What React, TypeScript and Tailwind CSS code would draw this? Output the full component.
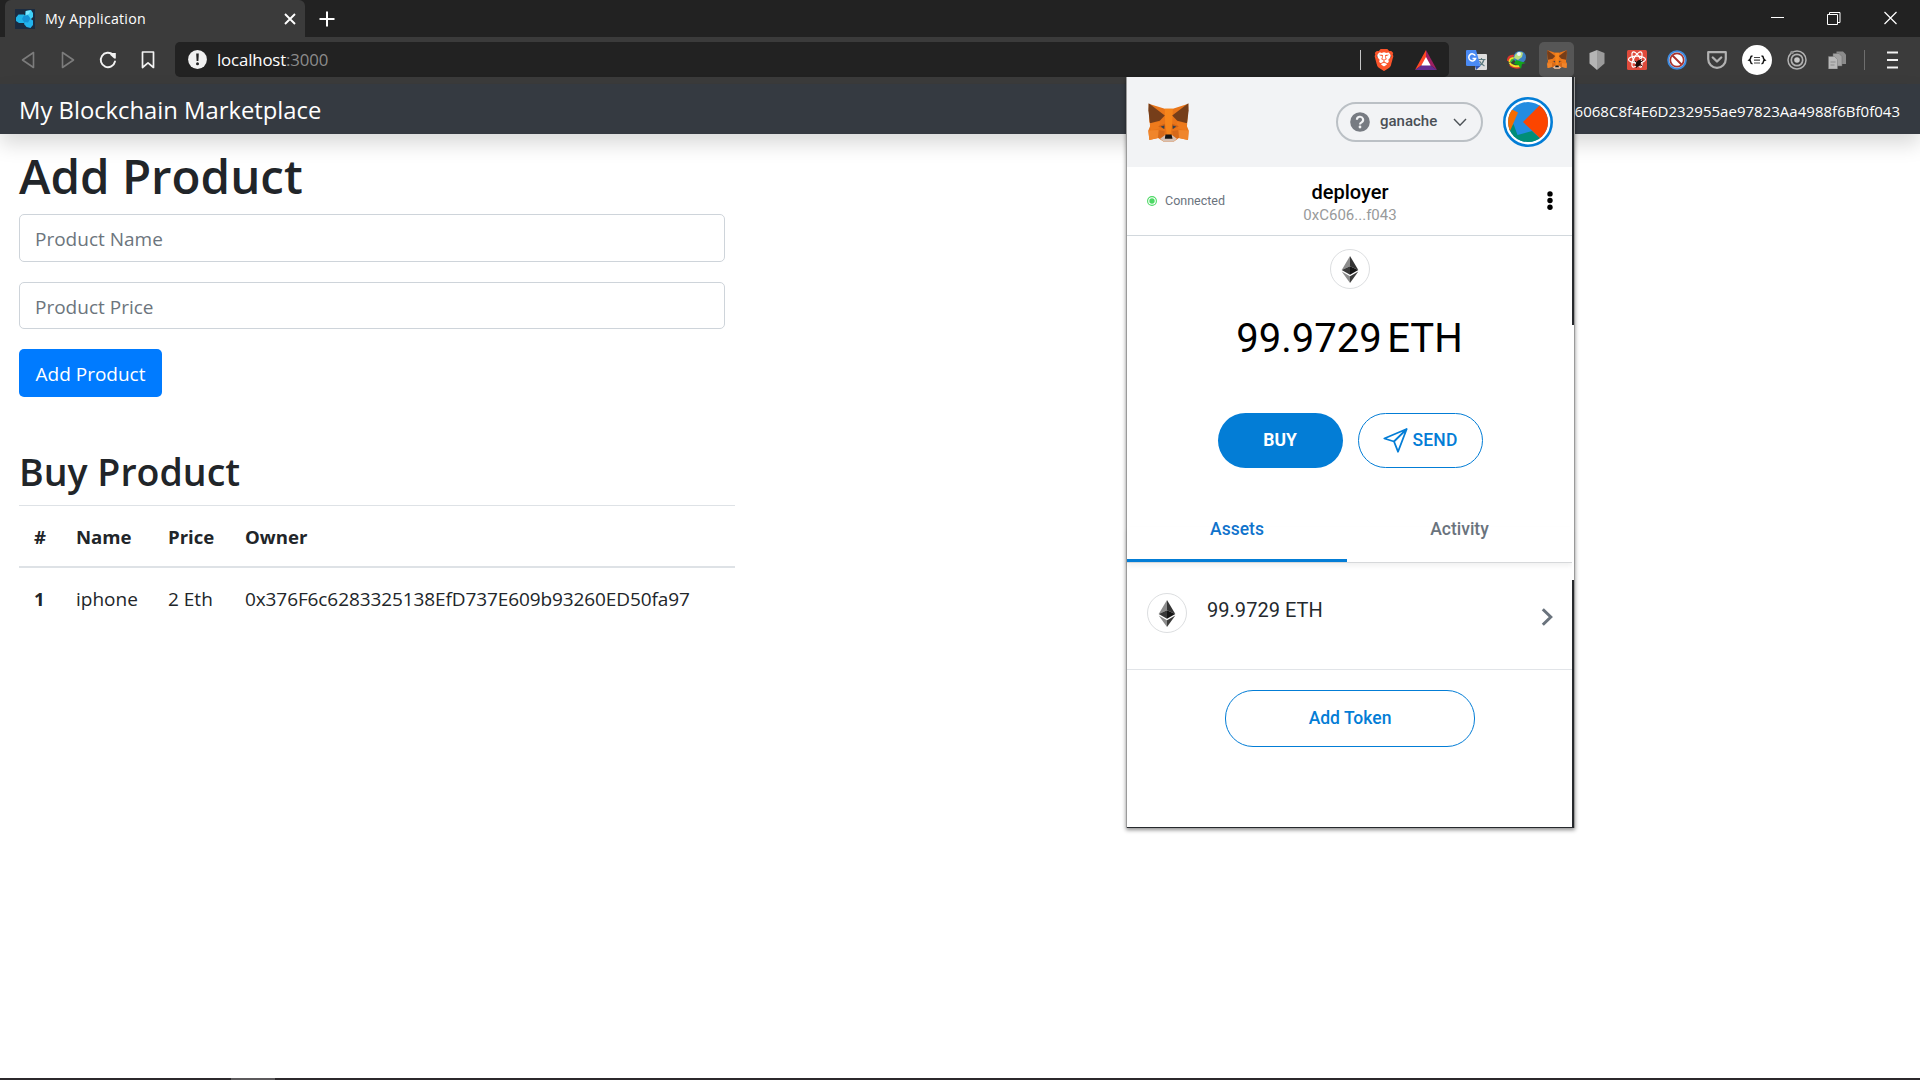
import React from 'react';
import { SiBrave } from 'react-icons/si';

function Fox({ className }: { className: string }) {
  return (
    <svg className={className} viewBox="0 0 122 116">
      <polygon points="2,2 50,17 74,17 120,2 117,58 113,62 121,82 119,110 92,104 76,115 47,115 30,104 4,110 1,82 9,62 4,58" fill="#e8751a" />
      <polygon points="50,17 74,17 72,62 67,94 56,94 51,62" fill="#f6851b" />
      <polygon points="5,60 37,56 32,76 8,82" fill="#ee7a1c" />
      <polygon points="117,60 85,56 90,76 114,82" fill="#ee7a1c" />
      <polygon points="1,82 32,80 30,104 4,110" fill="#f0852b" />
      <polygon points="121,82 90,80 92,104 119,110" fill="#f0852b" />
      <polygon points="32,80 50,84 46,103 30,104" fill="#d5691a" />
      <polygon points="90,80 72,84 76,103 92,104" fill="#d5691a" />
      <polygon points="2,1 50,37 35,53 6,60 1,22" fill="#763e1a" />
      <polygon points="120,1 72,37 87,53 116,60 121,22" fill="#763e1a" />
      <polygon points="30,69 50,62 50,78" fill="#cd6116" />
      <polygon points="92,69 72,62 72,78" fill="#cd6116" />
      <polygon points="38,70 49,67 48,77" fill="#33414d" />
      <polygon points="84,70 73,67 74,77" fill="#33414d" />
      <polygon points="36,106 50,96 72,96 86,106 76,115 47,115" fill="#d7c1b3" />
      <polygon points="52,94 70,94 73,106 50,106" fill="#161616" />
    </svg>
  );
}

function Eth() {
  return (
    <div className="flex h-10 w-10 shrink-0 items-center justify-center rounded-full border border-[#dcdee0] bg-white">
      <svg className="h-[27px] w-[18px]" viewBox="0 0 18 28">
        <polygon points="9,0 9,10.5 0.4,14.5" fill="#8c8c8c" />
        <polygon points="9,0 17.6,14.5 9,10.5" fill="#343434" />
        <polygon points="0.4,14.5 9,10.5 9,19.4" fill="#393939" />
        <polygon points="17.6,14.5 9,10.5 9,19.4" fill="#141414" />
        <polygon points="0.4,16.2 9,21 9,28" fill="#8c8c8c" />
        <polygon points="17.6,16.2 9,21 9,28" fill="#3c3c3b" />
      </svg>
    </div>
  );
}

function Cell({ children }: { children: React.ReactNode }) {
  return <div className="flex h-[35px] w-10 shrink-0 items-center justify-center">{children}</div>;
}

function TabStrip() {
  return (
    <div className="flex h-[37px] bg-[#222222] pl-[5px]">
      <div className="flex h-[37px] w-[300px] items-center rounded-t-md bg-[#3b3b3b] pl-[10px] pr-[9px]">
        <svg className="h-5 w-5" viewBox="0 0 20 20">
          <rect width="20" height="20" fill="#1b2b40" />
          <path d="M1 8.500 3.500 5.500H9l3 3.500-2.500 5H4L1 12z" fill="#20b4e8" />
          <path d="m10.500 2 5.500-1 2 3v4l-3 3-5-3z" fill="#3fd0f7" />
          <path d="m10 12 5-2.500 3 2V16l-2.500 3-4-1-2.500-3z" fill="#22b4ee" />
          <path d="M8.500 7 13 6l2.500 3.500-2.500 4-4-.5-2-3z" fill="#1593d6" />
          <path d="m11 2 4.500-.5L14 5l-3 1z" fill="#7be6ff" />
        </svg>
        <span className="ml-[10px] mt-px flex-1 text-[14.200px] tracking-[0.230px] text-white">My Application</span>
        <svg className="h-3 w-3" viewBox="0 0 12 12" stroke="#fff" strokeWidth="1.900" fill="none"><path d="m1 1 10 10M11 1 1 11" /></svg>
      </div>
      <div className="flex flex-1 items-center pl-[14px]">
        <svg className="h-4 w-4" viewBox="0 0 16 16" stroke="#fff" strokeWidth="2" fill="none"><path d="M8 .5v15M.5 8h15" /></svg>
      </div>
      <div className="flex items-center pb-px pr-[22px]">
        <svg className="h-[14px] w-[14px]" viewBox="0 0 14 14" stroke="#fff" fill="none"><path d="M0 6.500h13" /></svg>
        <svg className="ml-[42px] h-[14px] w-[14px]" viewBox="0 0 14 14" stroke="#fff" fill="none"><path d="M.5 3.500h10v10H.5zM2.500 3.500V1.500h10.500v10h-2.500" /></svg>
        <svg className="ml-[43px] h-[14px] w-[14px]" viewBox="0 0 14 14" stroke="#fff" strokeWidth="1.200" fill="none"><path d="m.5 1 12 12M12.500 1l-12 12" /></svg>
      </div>
    </div>
  );
}

function Toolbar() {
  return (
    <div className="flex h-[47px] items-start bg-[#3b3b3b] pt-[5px]">
      <div className="flex h-[35px] w-[175px] items-center">
        <svg className="ml-[21px] h-[18px] w-[14px]" viewBox="0 0 14 18" fill="none" stroke="#7c7c7c" strokeWidth="1.600" strokeLinejoin="round"><path d="M12.500 1.500v15L1.500 9z" /></svg>
        <svg className="ml-[26px] h-[18px] w-[14px]" viewBox="0 0 14 18" fill="none" stroke="#7c7c7c" strokeWidth="1.600" strokeLinejoin="round"><path d="M1.500 1.500v15l11-7.500z" /></svg>
        <svg className="ml-[24px] h-[18px] w-[18px]" viewBox="0 0 18 18" fill="none" stroke="#f2f2f2" strokeWidth="1.900"><path d="M16 10.500A7.200 7.200 0 1 1 14 3.800" strokeLinecap="round" /><path d="M11.300 2h5.500v5.500h-1.600L11.300 4z" fill="#f2f2f2" stroke="none" /></svg>
        <svg className="ml-[24px] h-[18px] w-[14px]" viewBox="0 0 14 18" fill="none" stroke="#f2f2f2" strokeWidth="1.700" strokeLinejoin="round"><path d="M1.500 1h11v15.500L7 11.800l-5.500 4.700z" /></svg>
      </div>
      <div className="flex h-[35px] w-[1274px] items-center rounded-[5px] bg-[#222222] pl-[13px] pr-[12px]">
        <svg className="h-[19px] w-[19px]" viewBox="0 0 19 19"><circle cx="9.500" cy="9.500" r="9.400" fill="#f0f0f0" /><path d="M8.200 3.500h2.600l-.4 7.500H8.600z" fill="#222" /><circle cx="9.500" cy="13.800" r="1.500" fill="#222" /></svg>
        <span className="ml-[10px] flex-1 pt-px text-[16.800px] tracking-[-0.140px] text-white">localhost<span className="text-[#8c8c8c]">:3000</span></span>
        <div className="h-5 w-px bg-[#c4c4c4]" />
        <div className="relative ml-[13px] h-[22px] w-5">
          <svg className="absolute inset-0 h-[22px] w-5" viewBox="0 0 20 22"><path d="M6 2h8l3 3-1.500 9.500L10 20l-5.500-5.500L3 5z" fill="#fff" /></svg>
          <SiBrave className="absolute left-[-1px] top-0 h-[22px] w-[22px] text-[#fb542b]" />
        </div>
        <svg className="ml-[21px] h-5 w-[22px]" viewBox="0 0 22 20"><polygon points="11,0 0,20 11,12" fill="#ff4724" /><polygon points="11,0 22,20 11,12" fill="#9e1f63" /><polygon points="0,20 22,20 11,12" fill="#662d91" /><polygon points="11,7 6.300,15.500 15.700,15.500" fill="#fff" /></svg>
      </div>
      <div className="flex pl-[7.500px]">
        <Cell>
          <svg className="h-5 w-[21px]" viewBox="0 0 21 20"><rect x="9" y="4" width="12" height="16" rx="1" fill="#dedede" /><path d="M12 9.500h7.500M15.500 8v1.500M18 9.500c-.8 3-2.500 5-5 6.500M13.500 11c1 2.500 3 4 5 5" stroke="#607c80" strokeWidth="1.200" fill="none" /><path d="M1 0h9l4.500 16H1.200Q0 16 0 15V1q0-1 1-1z" fill="#4a8af4" /><path d="M10 20 9 16h5.500z" fill="#2f57b8" /><path d="M9.300 5.600A3.500 3.500 0 1 0 9.600 8.500H6.500" stroke="#fff" strokeWidth="1.500" fill="none" /></svg>
        </Cell>
        <Cell>
          <svg className="h-5 w-5" viewBox="0 0 20 20"><path d="M1 11c0-6 8-7 11-2M3 15c3 3 8 3 10 2" fill="none" stroke="#df362d" strokeWidth="2.200" /><path d="M2.500 12c0-5 7-5 9-2M2.500 12.500c1 3 6 4.500 10 3.500" fill="none" stroke="#f0df29" strokeWidth="2" /><path d="M4 12c1-4 6-3 7-1" fill="none" stroke="#37b83a" strokeWidth="1.600" /><circle cx="12.800" cy="7.200" r="6.200" fill="#3c7fc2" /><path d="M8 5c2-3 6-4 8-2l-1 4-4 3-4-2z" fill="#b7dd7e" /><circle cx="12" cy="4" r="2" fill="#e6f4ff" /><path d="m9 10 10 3-4 1-1 5-2.500-4L7 14z" fill="#12a51e" /></svg>
        </Cell>
        <Cell>
          <div className="flex h-[35px] w-[35px] shrink-0 items-center justify-center rounded-[5px] bg-[#565656]"><Fox className="h-[19px] w-5" /></div>
        </Cell>
        <Cell>
          <svg className="h-5 w-4" viewBox="0 0 16 20"><path d="M8 0 .5 3v10.500L8 20z" fill="#b5b5b5" /><path d="m8 0 7.500 3v10.500L8 20z" fill="#9b9b9b" /></svg>
        </Cell>
        <Cell>
          <svg className="h-5 w-5" viewBox="0 0 20 20"><rect width="20" height="20" rx="1.500" fill="#e04a3b" /><g fill="none" stroke="#fff" strokeWidth="1.200"><ellipse cx="10" cy="9.500" rx="8.500" ry="3.300" /><ellipse cx="10" cy="9.500" rx="8.500" ry="3.300" transform="rotate(60 10 9.500)" /><ellipse cx="10" cy="9.500" rx="8.500" ry="3.300" transform="rotate(120 10 9.500)" /></g><ellipse cx="11.500" cy="13.400" rx="2.300" ry="3.600" fill="#1d0d0b" transform="rotate(25 11.500 13)" /><path d="m7.500 11 8 5M8 15.500l8-5M9 18l5-9" stroke="#1d0d0b" strokeWidth="1" /></svg>
        </Cell>
        <Cell>
          <svg className="h-5 w-5" viewBox="0 0 20 20"><circle cx="10" cy="10" r="8.800" fill="#fff" stroke="#3d8be0" strokeWidth="2" /><circle cx="10" cy="10" r="6.700" fill="#fff" stroke="#a8322c" strokeWidth="1.700" /><path d="m5.500 5.500 9 9" stroke="#a8322c" strokeWidth="2" /></svg>
        </Cell>
        <Cell>
          <svg className="h-[18px] w-5" viewBox="0 0 20 18"><path d="M1.200 1.200h17.600V8a8.800 8.800 0 0 1-17.600 0z" fill="none" stroke="#b1b1b1" strokeWidth="2.200" strokeLinejoin="round" /><path d="m5.800 6.500 4.200 4 4.200-4" fill="none" stroke="#b1b1b1" strokeWidth="2.400" strokeLinecap="round" strokeLinejoin="round" /></svg>
        </Cell>
        <Cell>
          <svg className="h-[30px] w-[30px] shrink-0" viewBox="0 0 30 30"><circle cx="15" cy="15" r="15" fill="#fff" /><path d="M10.500 11q-1.800 0-1.800 1.500t-1.500 2.700q1.500.3 1.500 1.800t1.800 1.700M19.500 11q1.800 0 1.800 1.500t1.500 2.700q-1.500.3-1.500 1.800t-1.800 1.700" fill="none" stroke="#111" strokeWidth="1.500" /><path d="M12 12.500h6M12 15.200h6M12 18h6" stroke="#444" strokeWidth="1.200" /></svg>
        </Cell>
        <Cell>
          <svg className="h-5 w-5" viewBox="0 0 20 20" fill="none" stroke="#b1b1b1"><circle cx="10" cy="10" r="9" strokeWidth="1.500" /><circle cx="10" cy="10" r="5.700" strokeWidth="1.700" /><circle cx="10" cy="10" r="2.800" fill="#c8c8c8" stroke="none" /><circle cx="5" cy="2.500" r="1.800" fill="#8a8a8a" stroke="none" /></svg>
        </Cell>
        <Cell>
          <svg className="h-[18px] w-[18px]" viewBox="0 0 18 18"><path d="M8.500.500h6.500l3 3V13H8.500z" fill="#8b8b8b" /><path d="M5 2.500h6l3 3V15H5z" fill="#a3a3a3" stroke="#6a6a6a" strokeWidth=".5" /><path d="M.5 5.500h6l3 3V18h-9z" fill="#b9b9b9" stroke="#777" strokeWidth=".5" /><path d="M2.500 11h5M2.500 14h4" stroke="#8b8b8b" /></svg>
        </Cell>
      </div>
      <div className="flex h-[35px] items-center pl-[7.500px]">
        <div className="h-5 w-px bg-[#6e6e6e]" />
        <svg className="ml-[22px] h-[18px] w-[11px]" viewBox="0 0 11 18" stroke="#f2f2f2" strokeWidth="1.800"><path d="M0 1.500h11M0 9h11M0 16.500h11" /></svg>
      </div>
    </div>
  );
}

function WalletPopup() {
  return (
    <div className="absolute left-[1126px] top-[77px] w-[449px] border-x border-[#9b9b9b] bg-white font-['Roboto',sans-serif] shadow-[0_2px_4px_rgba(0,0,0,0.45)]">
      <div className="flex">
        <div className="flex h-[750px] w-[445px] flex-col">
          <div className="flex h-[90px] items-center bg-[#f2f3f5] pl-[21px] pr-[19px]">
            <Fox className="h-[39px] w-[41px]" />
            <div className="ml-auto flex h-10 w-[147px] items-center rounded-full border-2 border-[#bbc0c5] pl-[12px]">
              <svg className="h-5 w-5" viewBox="0 0 20 20"><circle cx="10" cy="10" r="9.800" fill="#777b82" /><path d="M6.900 7.800a3.100 3 0 1 1 4.700 2.500q-1.600.9-1.600 2.100" fill="none" stroke="#f2f3f5" strokeWidth="2.100" /><circle cx="10" cy="15" r="1.400" fill="#f2f3f5" /></svg>
              <span className="-mt-[2px] ml-[10px] text-[15px] font-medium leading-5 text-[#4a4f56]">ganache</span>
              <svg className="ml-[16px] h-[9px] w-[14px]" viewBox="0 0 14 9" fill="none" stroke="#4d5257" strokeWidth="1.400"><path d="m1 1 6 6.300L13 1" /></svg>
            </div>
            <svg className="ml-5 h-[50px] w-[50px]" viewBox="0 0 50 50">
              <defs><clipPath id="avatar"><circle cx="25" cy="25" r="20" /></clipPath></defs>
              <circle cx="25" cy="25" r="23.700" fill="#fff" stroke="#037dd6" strokeWidth="2.600" />
              <g clipPath="url(#avatar)">
                <rect width="50" height="50" fill="#238ce1" />
                <polygon points="10.500,27 14.500,38 29,34 40,44 25,50 5,42 6,32" fill="#018e77" />
                <polygon points="4,10 15,15.500 7,34 4,34" fill="#f66c00" />
                <polygon points="20,25 39,6 52,25 39,43" fill="#fc4500" />
              </g>
            </svg>
          </div>
          <div className="grid h-[69px] grid-cols-[1fr_auto_1fr] items-center border-b border-[#d2d8dd] px-[19px]">
            <div className="flex items-center gap-2 pl-px">
              <svg className="h-[10px] w-[10px]" viewBox="0 0 10 10"><circle cx="5" cy="5" r="4.400" fill="none" stroke="#4cd964" strokeWidth="1.100" /><circle cx="5" cy="5" r="2.700" fill="#4cd964" /></svg>
              <span className="text-[12.500px] text-[#6a737d]">Connected</span>
            </div>
            <div className="pl-px pt-[5px] text-center">
              <div className="text-xl font-medium leading-6 text-black">deployer</div>
              <div className="text-[15px] leading-[23px] text-[#989a9b]">0xC606...f043</div>
            </div>
            <svg className="-mt-px h-[19px] w-[6px] justify-self-end" viewBox="0 0 6 19"><circle cx="3" cy="2.900" r="2.700" /><circle cx="3" cy="9.500" r="2.700" /><circle cx="3" cy="16.200" r="2.700" /></svg>
          </div>
          <div className="flex h-[291px] shrink-0 flex-col items-center pt-[13px]">
            <Eth />
            <div className="mt-[25px] flex h-[50px] items-center gap-[5.500px] text-[40px] leading-none text-black">
              <span>99.9729</span><span>ETH</span>
            </div>
            <div className="mt-[49px] flex gap-[15px] pl-px text-[17.500px] font-medium">
              <div className="flex h-[55px] w-[125px] items-center justify-center rounded-[28px] bg-[#037dd6] pt-px font-bold text-white">BUY</div>
              <div className="flex h-[55px] w-[125px] items-center justify-center gap-[5px] rounded-[28px] border border-[#037dd6] text-[#037dd6]">
                <svg className="h-[25px] w-[25px]" viewBox="0 0 25 25" fill="none" stroke="#037dd6" strokeWidth="1.800" strokeLinejoin="round"><path d="M23.700 1 1.300 10.500 11 13.500l4 10.200zM11 13.500 23.700 1" /></svg>
                <span className="pt-px tracking-[0.150px]">SEND</span>
              </div>
            </div>
          </div>
          <div className="flex h-[36px] shrink-0 border-b border-[#d6d8da] text-[17.500px] font-medium shadow-[0_3px_5px_rgba(0,0,0,0.06)]">
            <div className="-mt-[32px] flex h-[67px] w-[220px] items-center justify-center border-b-[3px] border-[#037dd6] pt-[6px] text-[#1073cc]">Assets</div>
            <div className="-mt-[32px] flex h-[67px] flex-1 items-center justify-center pt-[3px] text-[#6a737d]">Activity</div>
          </div>
          <div className="flex h-[107px] shrink-0 items-start border-b border-[#e1e4e8] pl-5 pr-[19px] pt-[30px]">
            <Eth />
            <span className="ml-[20px] flex-1 pt-[2px] text-xl leading-[30px] tracking-[0.040px] text-[#24292e]">99.9729 ETH</span>
            <svg className="mt-[15px] h-[18px] w-[12px]" viewBox="0 0 12 18" fill="none" stroke="#6a737d" strokeWidth="3"><path d="m1.800 1.200 8 7.800-8 7.800" /></svg>
          </div>
          <div className="mt-5 flex h-[57px] w-[250px] items-center justify-center self-center rounded-[28px] border border-[#037dd6] pl-px pt-px text-[17.500px] font-medium text-[#037dd6]">Add Token</div>
        </div>
        <div className="flex w-[2px] flex-col bg-[#26292d]">
          <div className="h-[248px]" />
          <div className="h-[255px] bg-white" />
        </div>
      </div>
      <div className="h-px bg-[#26292d]" />
    </div>
  );
}

export default function App() {
  return (
    <div className="relative flex h-[1080px] w-[1920px] flex-col overflow-hidden bg-white font-['Open_Sans',sans-serif] leading-none text-[#212529]">
      <TabStrip />
      <Toolbar />
      <nav className="flex h-[50px] shrink-0 items-center justify-between bg-[#353a41] pl-[19px] pr-5 text-white shadow-[0_10px_20px_rgba(0,0,0,0.15)]">
        <span className="pt-[2px] text-[23.800px] leading-[48px]">My Blockchain Marketplace</span>
        <span className="pt-[5px] text-[15px] tracking-[0.020px]">0xC6068C8f4E6D232955ae97823Aa4988f6Bf0f043</span>
      </nav>
      <main className="flex flex-1 flex-col items-start pl-[19px]">
        <h1 className="flex h-20 items-center pt-[3px] text-[47.500px] font-semibold">Add Product</h1>
        <div className="flex h-12 w-[706px] items-center rounded-[5px] border border-[#ced4da] px-[15px] pt-[2px] text-[19px] text-[#6c757d]">Product Name</div>
        <div className="mt-5 flex h-[47px] w-[706px] items-center rounded-[5px] border border-[#ced4da] px-[15px] pt-[3px] text-[19px] text-[#6c757d]">Product Price</div>
        <div className="mt-5 flex h-12 w-[143px] items-center justify-center rounded-[5px] bg-[#007bff] pt-[2px] text-[19px] text-white">Add Product</div>
        <h2 className="mt-[47px] flex h-[61px] items-center pb-[5px] text-[37.500px] font-semibold">Buy Product</h2>
        <div className="w-[716px]">
          <div className="grid h-[61px] grid-cols-[42px_92px_77px_1fr] items-center border-t border-[#dee2e6] pl-[15px] pt-[3px] text-[18.600px] font-bold">
            <span>#</span><span>Name</span><span>Price</span><span>Owner</span>
          </div>
          <div className="grid h-[62px] grid-cols-[42px_92px_77px_1fr] items-center border-t-2 border-[#dee2e6] pl-[15px] pt-[2px] text-[19px]">
            <span className="text-[18.600px] font-bold">1</span><span>iphone</span><span>2 Eth</span><span className="tracking-[-0.100px]">0x376F6c6283325138EfD737E609b93260ED50fa97</span>
          </div>
        </div>
      </main>
      <div className="flex h-[2px] bg-[#2c292c] pl-[231px]"><div className="w-[44px] bg-[#5c5a5c]" /></div>
      <WalletPopup />
    </div>
  );
}
